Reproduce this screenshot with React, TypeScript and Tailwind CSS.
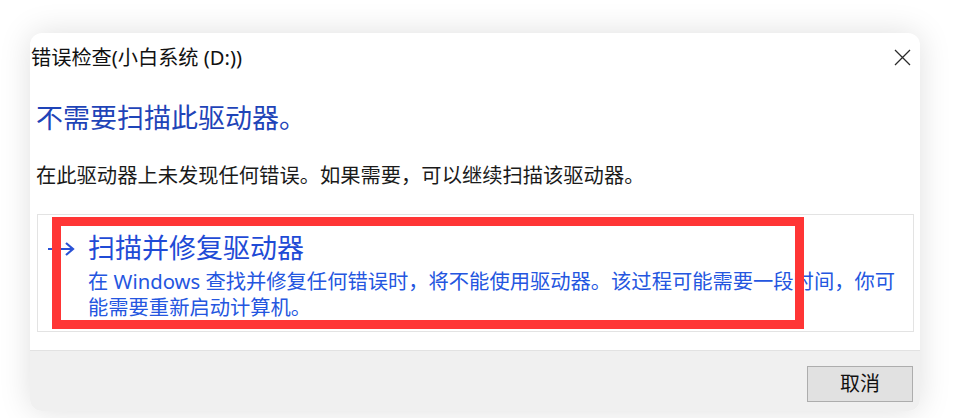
import React from "react";

const FONT = '"Noto Sans", "Noto Sans CJK SC", sans-serif';

export default function App() {
  return (
    <div
      className="relative w-[963px] h-[418px] overflow-hidden bg-white pl-[30px] pt-[33px]"
      style={{ fontFamily: FONT }}
    >
      <div className="flex h-[378px] w-[890px] flex-col overflow-hidden rounded-[12px] bg-white shadow-[0_0_32px_rgba(0,0,0,0.13)]">
        {/* title bar */}
        <div className="flex h-[48px] shrink-0 items-center justify-between pl-[1px] pr-[9px]">
          <span className="text-[20.2px] leading-[28px] text-[#111]">错误检查(小白系统 (D:))</span>
          <svg width="17" height="17" viewBox="0 0 17 17">
            <path d="M1 1 L16 16 M16 1 L1 16" stroke="#2b2b2b" strokeWidth="1.3" fill="none" />
          </svg>
        </div>

        {/* content */}
        <div className="flex flex-1 flex-col">
          <div className="mt-[19px] pl-[6px] text-[27px] leading-[36px] text-[#1f44b8]">
            不需要扫描此驱动器。
          </div>
          <div className="mt-[25px] pl-[6px] text-[20.3px] leading-[28px] text-[#1a1a1a]">
            在此驱动器上未发现任何错误。如果需要，可以继续扫描该驱动器。
          </div>

          <div className="ml-[7px] mr-[6px] mt-[25px] flex h-[118px] border border-[#e3e3e3] bg-white pt-[15px]">
            <div className="flex w-[50px] shrink-0 justify-start pl-[10px] pt-[12px]">
              <svg width="27" height="14" viewBox="0 0 27 14">
                <path d="M0 7 L25 7 M18 1 L25 7 L18 13" stroke="#2a52d6" strokeWidth="2.2" fill="none" />
              </svg>
            </div>
            <div className="flex flex-col">
              <div className="whitespace-nowrap text-[27px] leading-[36px] text-[#1f4bd6]">扫描并修复驱动器</div>
              <div className="mt-[2px] whitespace-nowrap text-[20.3px] leading-[26px] text-[#2456e0]">
                在 Windows 查找并修复任何错误时，将不能使用驱动器。该过程可能需要一段时间，你可
              </div>
              <div className="whitespace-nowrap text-[20.3px] leading-[26px] text-[#2456e0]">能需要重新启动计算机。</div>
            </div>
          </div>
        </div>

        {/* bottom bar */}
        <div className="flex h-[61px] shrink-0 items-start justify-end border-t border-[#e2e2e2] bg-[#f0f0f0] pr-[7px] pt-[15px]">
          <button className="flex h-[36px] w-[106px] items-center justify-center border border-[#adadad] bg-[#e1e1e1] text-[20px] leading-[28px] text-[#111]">
            取消
          </button>
        </div>
      </div>

      {/* red annotation rectangle */}
      <div className="absolute left-[52px] top-[217px] h-[112px] w-[752px] border-[9px] border-[#ff3535]" />
    </div>
  );
}
